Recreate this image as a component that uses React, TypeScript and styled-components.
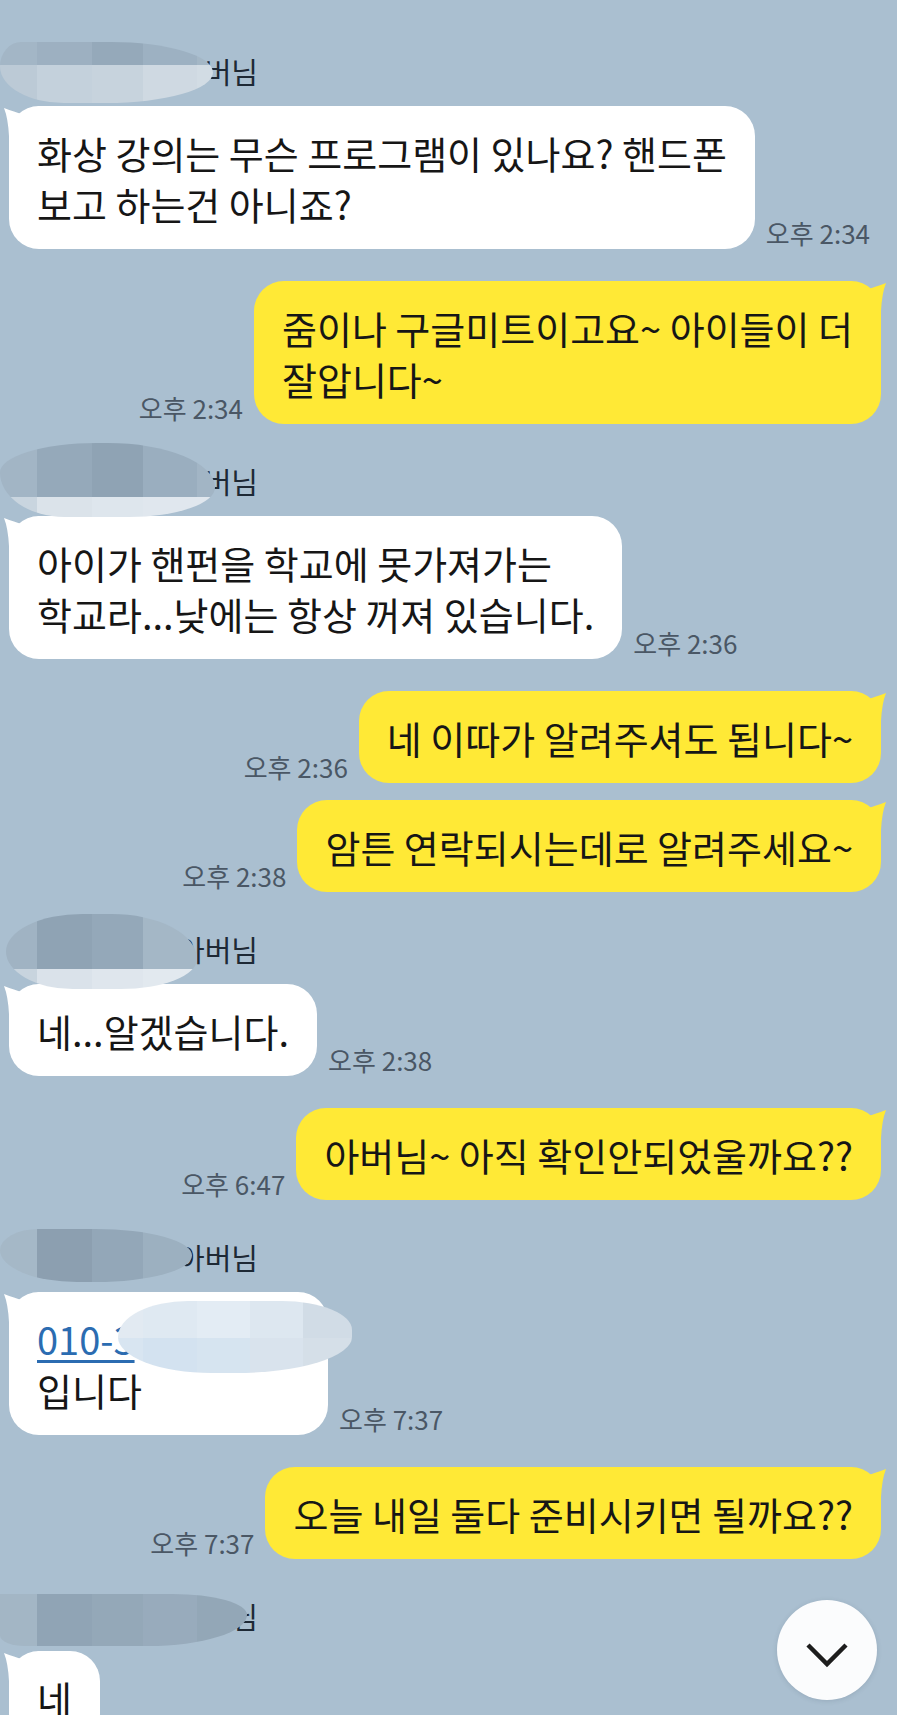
import React from "react";
import styled, { createGlobalStyle } from "styled-components";

const COLORS = {
  BG: "#aabfd0",
  YELLOW: "#ffe936",
  WHITE: "#ffffff",
  TEXT: "#161616",
  NAME: "#1e2935",
  TIME: "#4a5765",
  LINK: "#2b6cb1",
};

// mosaic cells of the blurred names sit on one global grid
const GRID_X = [37, 92, 143, 197, 250, 303, 356];

const mosaic = (colors: string[], left: number) => {
  const stops: string[] = [];
  let from = 0;
  colors.forEach((c, i) => {
    const edge = GRID_X.filter((g) => g > left)[i];
    const to = edge === undefined ? 2000 : edge - left;
    stops.push(`${c} ${from}px ${to}px`);
    from = to;
  });
  return `linear-gradient(90deg, ${stops.join(", ")})`;
};

const GlobalStyle = createGlobalStyle`
  html, body {
    margin: 0;
    padding: 0;
    background: ${COLORS.BG};
  }
  body {
    font-family: "Noto Sans CJK KR", "Noto Sans", sans-serif;
  }
`;

const Screen = styled.div`
  position: relative;
  width: 897px;
  height: 1715px;
  overflow: hidden;
  box-sizing: border-box;
  padding: 46px 16px 0 9px;
  background: ${COLORS.BG};
  display: flex;
  flex-direction: column;
  gap: 32px;
`;

const Group = styled.div`
  display: flex;
  flex-direction: column;
  gap: 17px;
`;

const NameRow = styled.div`
  position: relative;
  height: 34px;
  margin-top: 8px;
  margin-bottom: 1px;
  padding-left: 169px;
  font-size: 29px;
  line-height: 34px;
  color: ${COLORS.NAME};
`;

type BlurProps = {
  $x: number;
  $y: number;
  $w: number;
  $h: number;
  $gx: number;
  $split: number;
  $top: string[];
  $bottom: string[];
  $radius: string;
};

const Blur = styled.div<BlurProps>`
  position: absolute;
  left: ${(p) => p.$x}px;
  top: ${(p) => p.$y}px;
  width: ${(p) => p.$w}px;
  height: ${(p) => p.$h}px;
  border-radius: ${(p) => p.$radius};
  background:
    ${(p) => mosaic(p.$top, p.$gx)} top left / 100% ${(p) => p.$split}px no-repeat,
    ${(p) => mosaic(p.$bottom, p.$gx)} bottom left / 100% ${(p) => p.$h - p.$split}px no-repeat;
  z-index: 2;
`;

const Row = styled.div<{ $mine?: boolean }>`
  display: flex;
  align-items: flex-end;
  gap: 11px;
  flex-direction: ${(p) => (p.$mine ? "row-reverse" : "row")};
`;

const Bubble = styled.div<{ $mine?: boolean; $minWidth?: number }>`
  position: relative;
  box-sizing: border-box;
  min-width: ${(p) => (p.$minWidth ? `${p.$minWidth}px` : "0")};
  padding: 21px 28px 20px;
  border-radius: 30px;
  background: ${(p) => (p.$mine ? COLORS.YELLOW : COLORS.WHITE)};
  color: ${COLORS.TEXT};
  font-size: 38px;
  line-height: 51px;
  white-space: pre-line;
  &::before {
    content: "";
    position: absolute;
    top: 0;
    ${(p) => (p.$mine ? "right: -6px; transform: scaleX(-1);" : "left: -6px;")}
    width: 36px;
    height: 36px;
    background: inherit;
    clip-path: path("M1 2 Q12 6 19 8 Q26 4 36 0 L36 36 L6 36 L6 30 Q5 12 1 2 Z");
  }
`;

const Time = styled.span`
  flex: none;
  margin-bottom: 1px;
  font-size: 26px;
  line-height: 30px;
  color: ${COLORS.TIME};
  white-space: nowrap;
`;

const PhoneLink = styled.span`
  color: ${COLORS.LINK};
  text-decoration: underline;
  text-decoration-thickness: 3px;
  text-underline-offset: 5px;
`;

const ScrollDown = styled.button`
  position: absolute;
  right: 20px;
  bottom: 15px;
  width: 100px;
  height: 100px;
  padding: 9px 0 0;
  border: none;
  border-radius: 50%;
  background: #fbfcfd;
  box-shadow: 0 1px 5px rgba(40, 60, 80, 0.15);
  display: flex;
  align-items: center;
  justify-content: center;
`;

type MessageProps = {
  mine?: boolean;
  time?: string;
  minWidth?: number;
  children: React.ReactNode;
};

function Message({ mine, time, minWidth, children }: MessageProps) {
  return (
    <Row $mine={mine}>
      <Bubble $mine={mine} $minWidth={minWidth}>
        {children}
      </Bubble>
      {time && <Time>{time}</Time>}
    </Row>
  );
}

export default function App() {
  return (
    <>
      <GlobalStyle />
      <Screen>
        <Group>
          <NameRow>
            아버님
            <Blur
              $x={-9}
              $y={-12}
              $w={213}
              $h={61}
              $gx={0}
              $split={23}
              $top={["#a3b6c6", "#9db0c1", "#95a9ba", "#9db1c2", "#a4b7c6"]}
              $bottom={["#bccad6", "#c4d1dc", "#c7d3dd", "#cfd9e2", "#d2dce4"]}
              $radius="10% 48% 50% 30% / 40% 50% 50% 60%"
            />
          </NameRow>
          <Message time="오후 2:34">
            {"화상 강의는 무슨 프로그램이 있나요? 핸드폰\n보고 하는건 아니죠?"}
          </Message>
        </Group>

        <Group>
          <Message mine time="오후 2:34">
            {"줌이나 구글미트이고요~ 아이들이 더\n잘압니다~"}
          </Message>
        </Group>

        <Group>
          <NameRow>
            아버님
            <Blur
              $x={-9}
              $y={-21}
              $w={215}
              $h={74}
              $gx={0}
              $split={54}
              $top={["#a2b5c5", "#95a9ba", "#8fa3b4", "#9aaebf", "#a2b5c5"]}
              $bottom={["#c9d5df", "#dbe3ea", "#dee6ed", "#e0e7ee", "#e0e7ee"]}
              $radius="45% 50% 40% 30% / 40% 60% 40% 60%"
            />
          </NameRow>
          <Message time="오후 2:36">
            {"아이가 핸펀을 학교에 못가져가는\n학교라...낮에는 항상 꺼져 있습니다."}
          </Message>
        </Group>

        <Group>
          <Message mine time="오후 2:36">
            네 이따가 알려주셔도 됩니다~
          </Message>
          <Message mine time="오후 2:38">
            암튼 연락되시는데로 알려주세요~
          </Message>
        </Group>

        <Group>
          <NameRow>
            아버님
            <Blur
              $x={-3}
              $y={-18}
              $w={191}
              $h={75}
              $gx={6}
              $split={55}
              $top={["#a0b3c3", "#8fa3b4", "#94a8b9", "#a4b7c6", "#a4b7c6"]}
              $bottom={["#c8d4de", "#dae2ea", "#dfe6ed", "#e2e9ef", "#e2e9ef"]}
              $radius="40% 45% 40% 35% / 50% 60% 40% 50%"
            />
          </NameRow>
          <Message time="오후 2:38">네...알겠습니다.</Message>
        </Group>

        <Group>
          <Message mine time="오후 6:47">
            아버님~ 아직 확인안되었울까요??
          </Message>
        </Group>

        <Group>
          <NameRow>
            아버님
            <Blur
              $x={-9}
              $y={-11}
              $w={192}
              $h={53}
              $gx={0}
              $split={53}
              $top={["#a5b8c7", "#8c9fb0", "#93a7b8", "#9cb0c0", "#9cb0c0"]}
              $bottom={["#a5b8c7", "#8c9fb0", "#93a7b8", "#9cb0c0", "#9cb0c0"]}
              $radius="20% 50% 50% 40% / 40% 50% 50% 60%"
            />
          </NameRow>
          <Message time="오후 7:37" minWidth={319}>
            <PhoneLink>010-3</PhoneLink>
            {"\n입니다"}
            <Blur
              $x={109}
              $y={9}
              $w={234}
              $h={72}
              $gx={118}
              $split={37}
              $top={["#e2eaf2", "#dfe9f2", "#e3ecf4", "#dde7f0", "#d1dce6"]}
              $bottom={["#d8e5f1", "#d3e2f0", "#d6e4f0", "#d9e3ed", "#d5dfe8"]}
              $radius="30% 30% 50% 40% / 50% 40% 50% 50%"
            />
          </Message>
        </Group>

        <Group>
          <Message mine time="오후 7:37">
            오늘 내일 둘다 준비시키면 될까요??
          </Message>
        </Group>

        <Group>
          <NameRow>
            아버님
            <Blur
              $x={-9}
              $y={-5}
              $w={247}
              $h={52}
              $gx={0}
              $split={52}
              $top={["#a3b6c5", "#90a4b5", "#94a8b8", "#98abbc", "#93a7b7"]}
              $bottom={["#a3b6c5", "#90a4b5", "#94a8b8", "#98abbc", "#93a7b7"]}
              $radius="0 30% 40% 10% / 0 40% 60% 20%"
            />
          </NameRow>
          <Message>네</Message>
        </Group>

        <ScrollDown type="button" aria-label="아래로 이동">
          <svg width="44" height="26" viewBox="0 0 44 26">
            <polyline
              points="3,3 22,22 41,3"
              fill="none"
              stroke="#1d1d1d"
              strokeWidth="4.5"
            />
          </svg>
        </ScrollDown>
      </Screen>
    </>
  );
}
